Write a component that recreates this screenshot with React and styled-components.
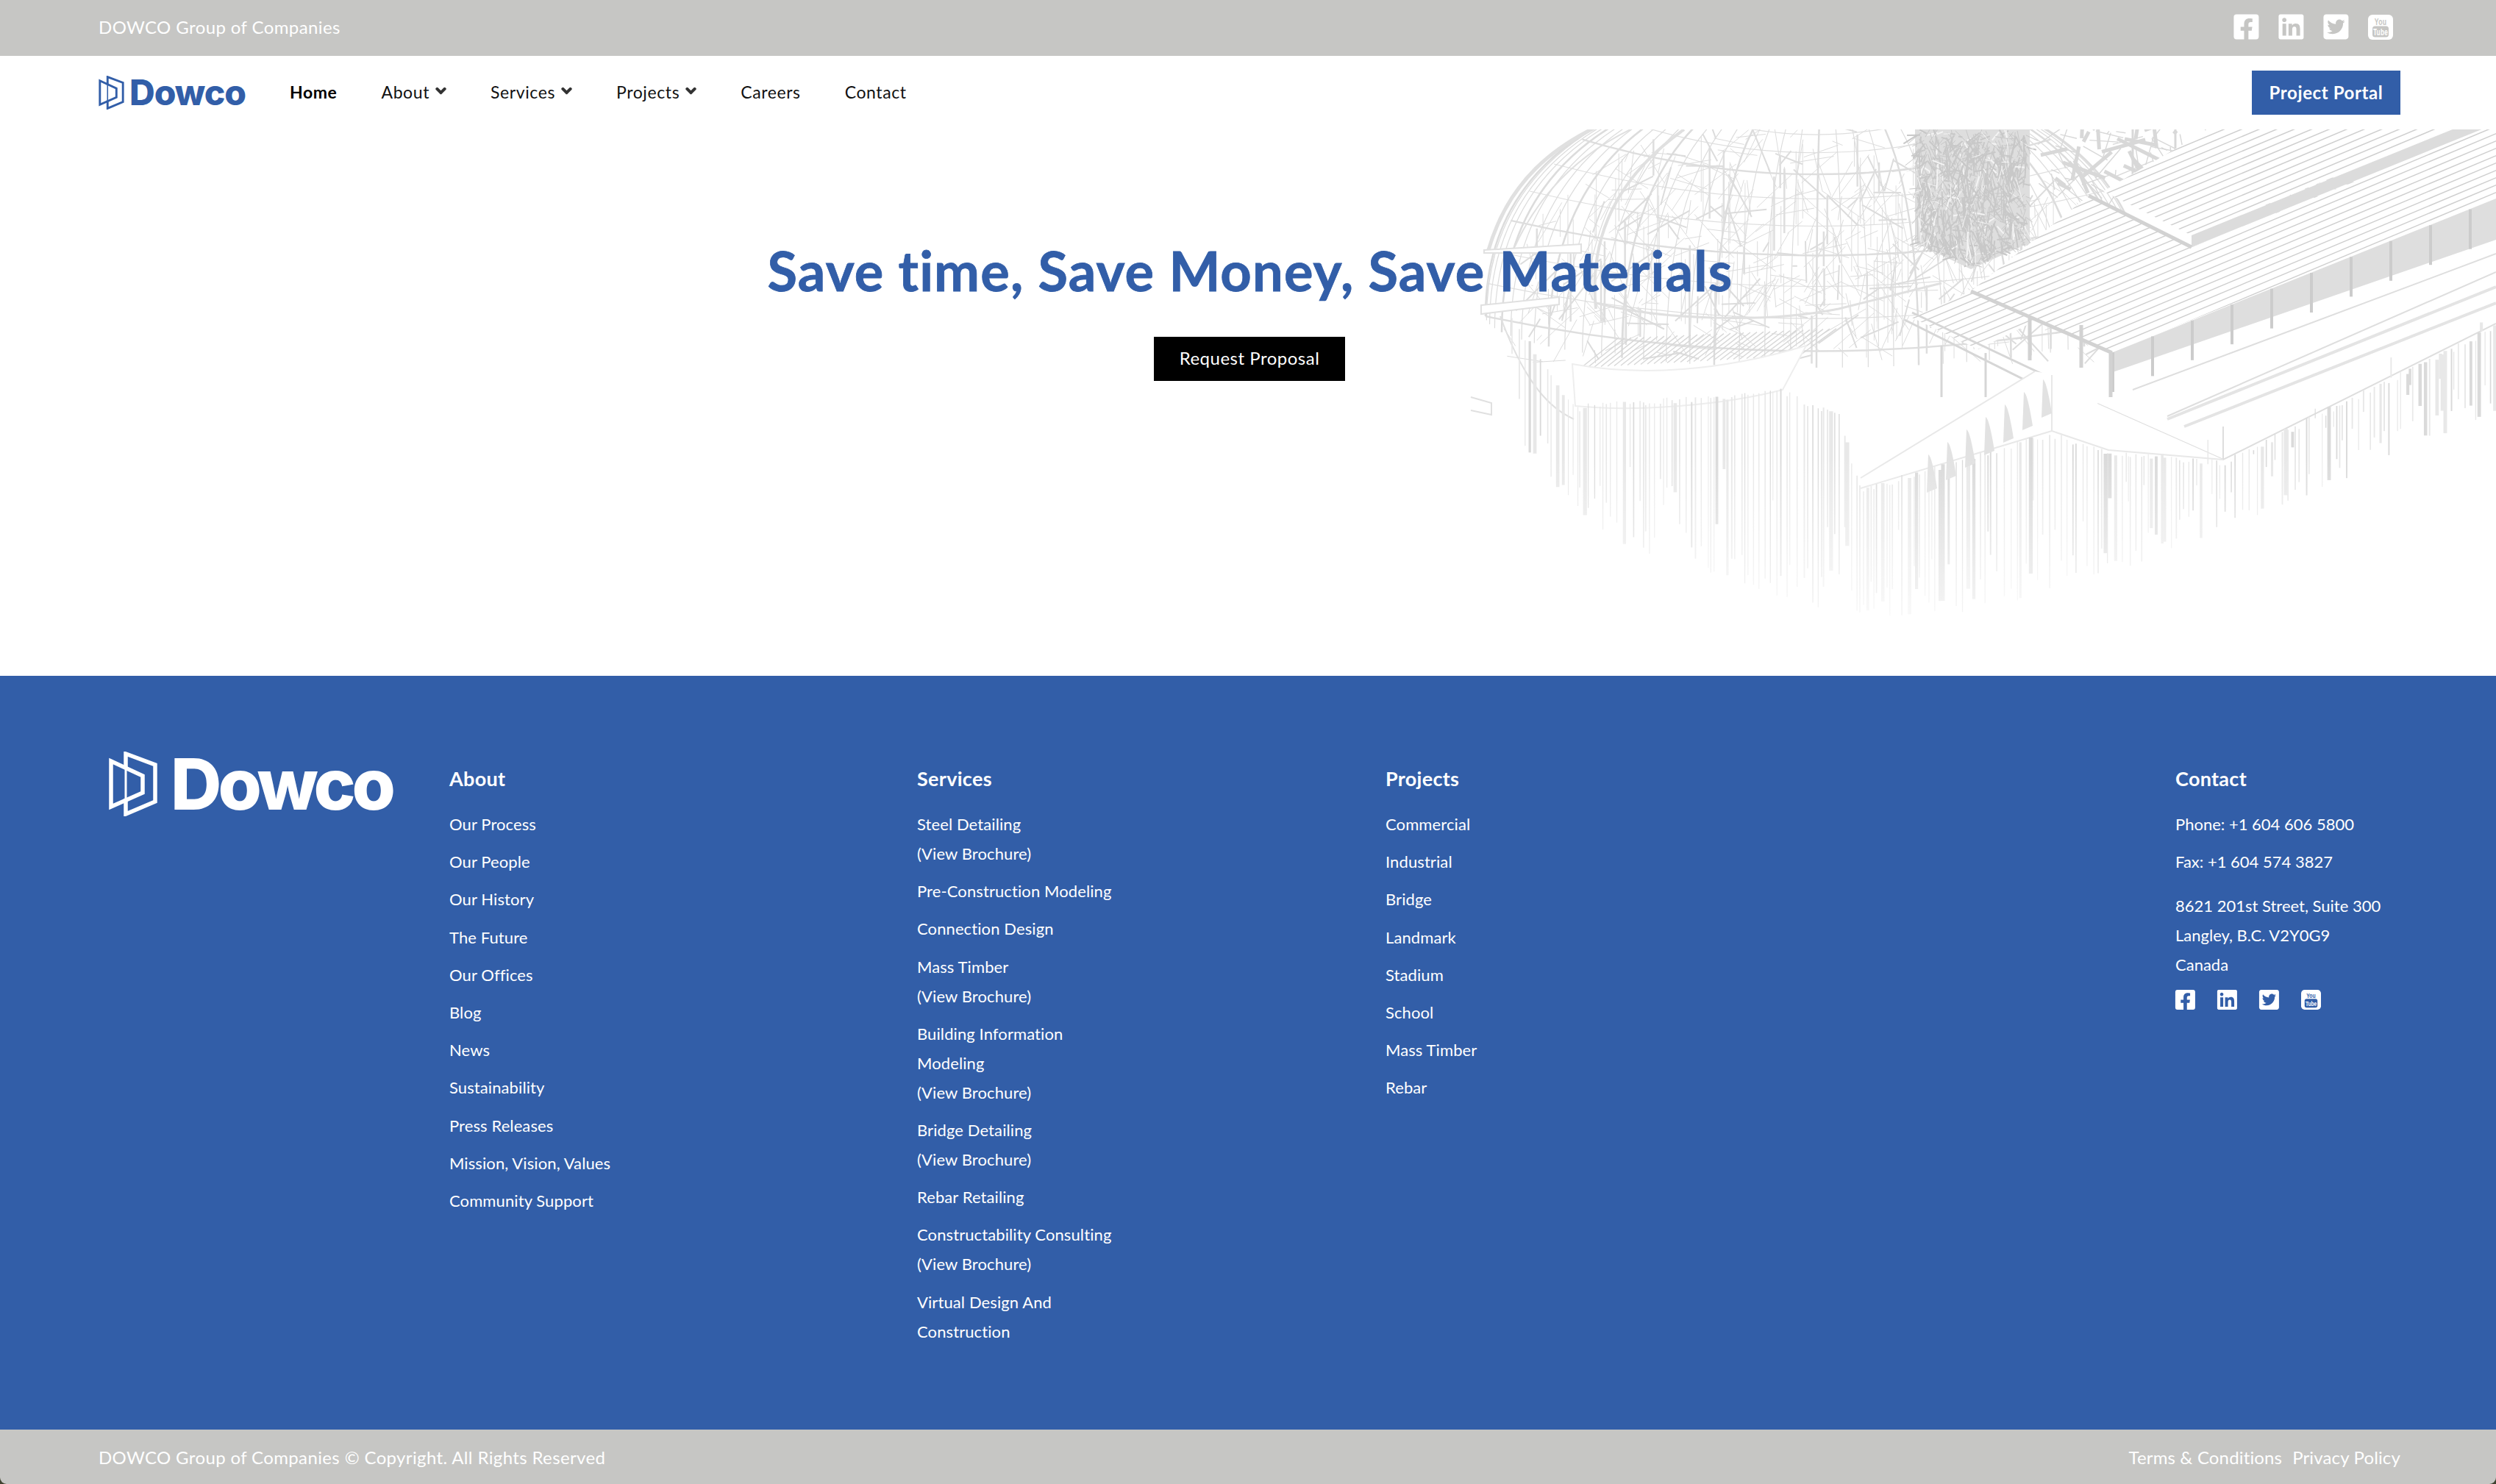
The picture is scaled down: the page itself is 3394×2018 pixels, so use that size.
import React from 'react';
import styled, { createGlobalStyle } from 'styled-components';
import { FaChevronDown, FaFacebookSquare, FaLinkedin, FaTwitterSquare } from 'react-icons/fa';

const BLUE = '#325ea8';
const GREY = '#c6c6c4';

const GlobalStyle = createGlobalStyle`
  html, body {
    margin: 0;
    padding: 0;
    background: #3f4330;
    font-family: 'Lato', 'Liberation Sans', sans-serif;
  }
  a {
    color: inherit;
    text-decoration: none;
  }
`;

const Page = styled.div`
  width: 3394px;
  height: 2018px;
  overflow: hidden;
  display: flex;
  flex-direction: column;
`;

const TopBar = styled.div`
  height: 76px;
  flex: none;
  box-sizing: border-box;
  background: ${GREY};
  color: #fff;
  display: flex;
  align-items: center;
  justify-content: space-between;
  padding: 0 140px 3px 134px;
  font-size: 24px;
  letter-spacing: 0.4px;
`;

const SocialRow = styled.div`
  display: flex;
  align-items: center;
  gap: ${props => props.$gap}px;
`;

const IconSlot = styled.span`
  display: flex;
  align-items: center;
  justify-content: center;
  width: ${props => props.$size}px;
  height: ${props => props.$size}px;
  svg {
    flex: none;
  }
`;

const NavBar = styled.div`
  height: 100px;
  flex: none;
  background: #fff;
  display: flex;
  align-items: center;
  padding: 0 130px 0 134px;
  position: relative;
  z-index: 1;
`;

const NavLinks = styled.nav`
  display: flex;
  align-items: center;
  gap: 60px;
  margin-left: 60px;
  margin-top: -3px;
  flex: 1;
`;

const NavItem = styled.a`
  display: flex;
  align-items: center;
  gap: 8px;
  font-size: 23px;
  letter-spacing: 0.6px;
  color: ${props => (props.$active ? '#000' : '#111')};
  font-weight: ${props => (props.$active ? 700 : 400)};
  svg {
    color: #333;
    stroke: #333;
    stroke-width: 60px;
    margin-top: -2px;
  }
`;

const PortalButton = styled.a`
  width: 202px;
  height: 60px;
  box-sizing: border-box;
  padding-bottom: 2px;
  background: ${BLUE};
  color: #fff;
  display: flex;
  align-items: center;
  justify-content: center;
  font-size: 24px;
  font-weight: 700;
  letter-spacing: 0.6px;
`;

const LogoWrap = styled.a`
  display: flex;
  align-items: center;
  flex: none;
  color: ${props => props.$color};
  gap: ${props => props.$gap}px;
`;

const LogoWord = styled.span`
  font-family: 'Inter', 'Liberation Sans', sans-serif;
  font-weight: 800;
  font-size: ${props => props.$size}px;
  line-height: 1;
  letter-spacing: ${props => props.$spacing}px;
`;

const Hero = styled.section`
  height: 743px;
  flex: none;
  background: #fff;
  position: relative;
  overflow: hidden;
  display: flex;
  flex-direction: column;
  align-items: center;
  padding: 142px 0 0 4px;
  box-sizing: border-box;
`;

const ArtLayer = styled.svg`
  position: absolute;
  top: 0;
  right: 0;
`;

const HeroTitle = styled.h1`
  position: relative;
  left: 1px;
  margin: 0 0 40px;
  font-size: 74px;
  line-height: 100px;
  font-weight: 700;
  letter-spacing: 1.15px;
  color: ${BLUE};
  -webkit-text-stroke: 0.8px ${BLUE};
`;

const ProposalButton = styled.a`
  position: relative;
  width: 260px;
  height: 60px;
  box-sizing: border-box;
  padding-bottom: 4px;
  background: #000;
  color: #fff;
  display: flex;
  align-items: center;
  justify-content: center;
  font-size: 24px;
  letter-spacing: 0.5px;
`;

const Footer = styled.footer`
  height: 1025px;
  flex: none;
  box-sizing: border-box;
  background: ${BLUE};
  color: #fff;
  padding: 99px 0 0 134px;
  display: grid;
  grid-template-columns: 477px 636px 637px 1074px 1fr;
  align-items: start;
`;

const FooterLogoCell = styled.div`
  padding-left: 14px;
`;

const Column = styled.div`
  padding-top: 21px;
`;

const ColumnTitle = styled.h4`
  margin: 0 0 22px;
  font-size: 27px;
  line-height: 40px;
  font-weight: 700;
  letter-spacing: 0.3px;
`;

const LinkList = styled.ul`
  list-style: none;
  margin: 0;
  padding: 0;
  display: flex;
  flex-direction: column;
  gap: 11.2px;
`;

const LinkItem = styled.li`
  font-size: 22px;
  line-height: 40px;
  letter-spacing: 0.1px;
  white-space: pre-line;
`;

const ContactLine = styled.div`
  font-size: 22px;
  line-height: 40px;
  margin-top: ${props => props.$top || 0}px;
`;

const ContactSocial = styled(SocialRow)`
  margin-top: 14px;
`;

const BottomBar = styled.div`
  height: 74px;
  flex: none;
  background: ${GREY};
  color: #fff;
  display: flex;
  align-items: center;
  justify-content: space-between;
  padding: 0 130px 0 134px;
  font-size: 24px;
  letter-spacing: 0.37px;
  border-radius: 0 0 9px 9px;
`;

const LegalLinks = styled.div`
  display: flex;
  gap: 14px;
  letter-spacing: 0.15px;
`;

function mulberry(seed) {
  let a = seed;
  return () => {
    a = (a + 0x6d2b79f5) | 0;
    let t = Math.imul(a ^ (a >>> 15), 1 | a);
    t = (t + Math.imul(t ^ (t >>> 7), 61 | t)) ^ t;
    return ((t ^ (t >>> 14)) >>> 0) / 4294967296;
  };
}

function interp(points, x) {
  for (let i = 1; i < points.length; i++) {
    if (x <= points[i][0]) {
      const [x0, y0] = points[i - 1];
      const [x1, y1] = points[i];
      return y0 + ((y1 - y0) * (x - x0)) / (x1 - x0);
    }
  }
  return points[points.length - 1][1];
}

const PILE_BOTTOM = [[2050, 560], [2071, 610], [2176, 730], [2350, 790], [2533, 846], [2700, 830], [2871, 780], [3148, 670], [3357, 575], [3394, 560]];
const PILE_TOP = [[2050, 420], [2140, 550], [2424, 528], [2500, 560], [2530, 662], [2790, 586], [2867, 610], [3023, 625], [3394, 440]];

function piles(rand) {
  const out = [];
  let x = 2056;
  while (x < 3394) {
    const bottom = interp(PILE_BOTTOM, x) - rand() * rand() * 170;
    const top = interp(PILE_TOP, x) + rand() * 10;
    const w = rand() < 0.22 ? 3 + rand() * 2.5 : 1 + rand();
    const darker = x > 2600 && x < 3200 ? 0.5 : 0.22;
    const tone = rand() < darker ? '#dadada' : '#e8e8e8';
    out.push(<line key={`p${x}`} x1={x} y1={top} x2={x} y2={bottom} stroke={tone} strokeWidth={w} />);
    x += 2.5 + rand() * 8;
  }
  return out;
}

function insideDome(x, y) {
  const u = (x - 2470) / 430;
  const v = (y - 430) / 290;
  return u * u + v * v < 1 && y < 495;
}

function dome(rand) {
  const out = [];
  const cx = 2470;
  const cy = 430;
  // meridians from the crown down to the rim
  for (let i = 0; i <= 40; i++) {
    const a = Math.PI * (i / 40);
    const rimX = cx - Math.cos(a) * 450;
    const rimY = cy + Math.sin(a) * 70;
    const d = `M${cx + 10} 90 Q${rimX} 130 ${rimX} ${rimY}`;
    out.push(<path key={`m${i}`} d={d} fill="none" stroke="#dcdcdc" strokeWidth={i % 4 === 0 ? 2.5 : 1.2} />);
  }
  // parallels
  for (let i = 1; i <= 12; i++) {
    const k = i / 12;
    const rx = 450 * Math.sin((k * Math.PI) / 2);
    const y = cy - 340 * Math.cos((k * Math.PI) / 2);
    const d = `M${cx - rx} ${y} Q${cx} ${y + 95} ${cx + rx} ${y}`;
    out.push(<path key={`r${i}`} d={d} fill="none" stroke="#dedede" strokeWidth={i % 3 === 0 ? 2.5 : 1.2} />);
  }
  // cross bracing and columns
  for (let i = 0; i < 620; i++) {
    const x = 2060 + rand() * 800;
    const y = 176 + rand() * 320;
    const dx = (rand() - 0.5) * 120;
    const dy = (rand() - 0.5) * 120;
    if (!insideDome(x, y) || !insideDome(x + dx, y + dy)) continue;
    out.push(<line key={`b${i}`} x1={x} y1={y} x2={x + dx} y2={y + dy} stroke="#dcdcdc" strokeWidth={rand() < 0.15 ? 2 : 1} />);
  }
  for (let i = 0; i < 190; i++) {
    const x = 2080 + rand() * 720;
    const y = 180 + rand() * 270;
    const len = 30 + rand() * 90;
    if (!insideDome(x, y) || !insideDome(x, y + len)) continue;
    out.push(<line key={`c${i}`} x1={x} y1={y} x2={x} y2={y + len} stroke="#dedede" strokeWidth={rand() < 0.25 ? 2.5 : 1} />);
  }
  // rims and outer shell
  out.push(
    <g key="shell" fill="none" stroke="#e0e0e0">
      <path d="M2024 340 C2050 250 2110 195 2200 160" strokeWidth="5" />
      <path d="M2060 335 C2090 270 2140 210 2230 170" strokeWidth="2" />
      <path d="M2170 420 C2160 320 2200 240 2290 176" strokeWidth="4" />
      <path d="M2018 340 L2150 332 L2150 344 L2018 344 Z" strokeWidth="2" fill="#fff" />
      <path d="M2014 415 L2120 404 L2120 414 L2014 427 Z" strokeWidth="2" fill="#fff" />
      <path d="M2000 540 L2028 548 L2028 564 L2000 558" strokeWidth="2" />
      <path d="M2170 412 C2260 435 2400 440 2500 420 L2640 385" strokeWidth="3" />
      <path d="M2040 430 C2080 540 2120 560 2140 570" strokeWidth="2" />
    </g>
  );
  return out;
}

function underDeck() {
  const out = [];
  for (let i = 0; i < 34; i++) {
    const x = 2150 + i * 9;
    out.push(<line key={`u${i}`} x1={x} y1={500 - i * 0.5} x2={x + 50} y2={460 - i * 0.4} stroke="#d8d8d8" strokeWidth="1.5" />);
  }
  return out;
}

function tower(rand) {
  const out = [];
  for (let i = 0; i < 1100; i++) {
    const x = 2606 + rand() * 150;
    const y = 176 + rand() * 190;
    const limit = 330 + 34 * (1 - Math.abs(x - 2680) / 76);
    if (y > limit) continue;
    const a = rand() * Math.PI;
    const len = 6 + rand() * 34;
    const y2 = Math.min(limit, y + Math.sin(a) * len);
    const tone = rand() < 0.12 ? '#f4f4f4' : '#c8c8c8';
    out.push(<line key={`t${i}`} x1={x} y1={y} x2={x + Math.cos(a) * len * 0.5} y2={y2} stroke={tone} strokeWidth={rand() < 0.4 ? 2 : 1} />);
  }
  return out;
}

function stripes(prefix, x0, x1, y0, step) {
  const out = [];
  let i = 0;
  for (let y = y0; y < 900; y += step) {
    out.push(<line key={`${prefix}${i++}`} x1={x0} y1={y} x2={x1} y2={y - (x1 - x0) * 0.42} stroke="#cfcfcf" strokeWidth="1.5" />);
  }
  return out;
}

function truss(rand) {
  const out = [];
  for (let i = 0; i < 130; i++) {
    const x = 2770 + rand() * 400;
    const y = 176 + rand() * 90;
    const dx = (rand() - 0.3) * 90;
    const dy = (rand() - 0.5) * 100;
    out.push(<line key={`x${i}`} x1={x} y1={y} x2={x + dx} y2={y + dy} stroke="#d8d8d8" strokeWidth={rand() < 0.3 ? 5 : 1.4} />);
  }
  for (let x = 2900; x < 3120; x += 58) {
    out.push(<line key={`xp${x}`} x1={x} y1={176} x2={x} y2={270 - (x - 2900) * 0.4} stroke="#d8d8d8" strokeWidth="3" />);
  }
  return out;
}

function wallPosts() {
  const out = [];
  for (let x = 2873, i = 0; x < 3394; x += 54, i++) {
    const y = 479 - (x - 2873) * 0.4;
    out.push(<line key={`w${i}`} x1={x} y1={y} x2={x} y2={y + 54} stroke="#cccccc" strokeWidth="4" />);
  }
  return out;
}

function fins() {
  const out = [];
  for (let i = 0; i < 7; i++) {
    const x = 2622 + i * 26;
    const top = 618 - i * 17;
    out.push(<path key={`f${i}`} d={`M${x} ${top} q5 2 12 46 l-14 6 Z`} fill="#e2e2e2" />);
  }
  return out;
}

function buildArt() {
  const rand = mulberry(41);
  return (
    <>
      <linearGradient id="pileFade" x1="0" y1="620" x2="0" y2="860" gradientUnits="userSpaceOnUse">
        <stop offset="0" stopColor="#fff" stopOpacity="0" />
        <stop offset="1" stopColor="#fff" stopOpacity="0.8" />
      </linearGradient>
      {dome(rand)}
      {underDeck()}
      <path d="M2138 495 C2230 512 2340 505 2456 470 L2424 530 C2340 552 2220 560 2142 552 Z" fill="#fff" stroke="#eeeeee" strokeWidth="2" />
      <rect x="2604" y="176" width="156" height="156" fill="#dedede" />
      <path d="M2604 330 L2680 366 L2760 330 Z" fill="#dedede" />
      {tower(rand)}
      <clipPath id="deckLower"><polygon points="2680,396 2870,479 3394,270 3394,170 2980,336 2840,266" /></clipPath>
      <clipPath id="deckUpper"><polygon points="2860,260 2980,320 3394,150 3394,60 3200,60" /></clipPath>
      <clipPath id="deckFront"><polygon points="2600,432 2680,396 2770,435 2690,475" /></clipPath>
      {truss(rand)}
      <polygon points="2600,432 2680,396 2770,435 2690,475" fill="#fff" />
      <polygon points="2680,396 2870,479 3394,270 3394,170 2980,336 2840,266" fill="#fff" />
      <polygon points="2860,260 2980,320 3394,150 3394,60 3200,60" fill="#fff" />
      <g clipPath="url(#deckFront)">{stripes('c', 2560, 2800, 400, 10)}</g>
      <g clipPath="url(#deckLower)">{stripes('a', 2660, 3400, 300, 10)}</g>
      <g clipPath="url(#deckUpper)">{stripes('b', 2800, 3400, 200, 10)}</g>
      <polygon points="2980,336 3394,168 3394,152 2980,320" fill="#dcdcdc" />
      <polygon points="2873,479 3394,270 3394,326 2873,506" fill="#dedede" />
      {wallPosts()}
      <path d="M2840 266 L2980 336 M2680 396 L2870 479 L2870 540 M2830 442 L2830 500 M2760 430 L2760 490" fill="none" stroke="#d2d2d2" strokeWidth="5" />
      <path d="M2600 425 L2780 510 M2590 435 L2760 520 M2640 470 L2640 540 M2700 480 L2700 540" fill="none" stroke="#d6d6d6" strokeWidth="3" />
      <polygon points="2852,549 3023,625 3394,440 3394,345 2900,530" fill="#fff" />
      <path d="M2852 549 L3023 625 L3394 440 M2947 566 L3394 370 M2900 530 L3394 345 M3023 625 L3023 580" fill="none" stroke="#dedede" strokeWidth="2" />
      <path d="M2947 570 L3394 390 M2970 580 L3394 412" fill="none" stroke="#e4e4e4" strokeWidth="4" />
      <polygon points="2767,505 2530,650 2530,664 2790,586 2867,612 3023,625 2852,549 2790,509" fill="#fff" />
      <path d="M2530 650 L2767 505 M2530 664 L2790 586 M2790 510 L2790 586 L2867 612 L3023 625" fill="none" stroke="#e8e8e8" strokeWidth="2" />
      {piles(rand)}
      {fins()}
      <rect x="1940" y="620" width="1454" height="299" fill="url(#pileFade)" />
    </>
  );
}

const art = buildArt();

function BuildingArt() {
  return (
    <ArtLayer width="1454" height="743" viewBox="1940 176 1454 743">
      {art}
    </ArtLayer>
  );
}

function LogoMark({ width, height, color }) {
  return (
    <svg width={width} height={height} viewBox="0 0 66 88" fill="none" stroke={color} strokeWidth="5.5">
      <path d="M3 13 L46 33 V56 L3 75 Z" />
      <path d="M23 24 V3 L63 18 V68 L23 85 V64" />
      <path d="M23 24 V64" strokeWidth="3" />
    </svg>
  );
}

function YoutubeSquare({ size, color, bg }) {
  return (
    <svg width={size} height={size} viewBox="0 0 34 34">
      <rect width="34" height="34" rx="6" fill={color} />
      <text transform="translate(17 13.5) scale(0.72 1)" textAnchor="middle" fontFamily="Liberation Sans, sans-serif" fontWeight="700" fontSize="12" fill={bg}>You</text>
      <rect x="6" y="15.5" width="22" height="15" rx="3.5" fill={bg} />
      <text transform="translate(17 27.5) scale(0.66 1)" textAnchor="middle" fontFamily="Liberation Sans, sans-serif" fontWeight="700" fontSize="12.5" fill={color}>Tube</text>
    </svg>
  );
}

function SocialIcons({ size, color, bg }) {
  const glyph = size * (512 / 448);
  return (
    <>
      <IconSlot $size={size}><FaFacebookSquare size={glyph} color={color} /></IconSlot>
      <IconSlot $size={size}><FaLinkedin size={glyph} color={color} /></IconSlot>
      <IconSlot $size={size}><FaTwitterSquare size={glyph} color={color} /></IconSlot>
      <IconSlot $size={size}><YoutubeSquare size={size} color={color} bg={bg} /></IconSlot>
    </>
  );
}

const ABOUT = ['Our Process', 'Our People', 'Our History', 'The Future', 'Our Offices', 'Blog', 'News', 'Sustainability', 'Press Releases', 'Mission, Vision, Values', 'Community Support'];
const SERVICES = [
  'Steel Detailing\n(View Brochure)',
  'Pre-Construction Modeling',
  'Connection Design',
  'Mass Timber\n(View Brochure)',
  'Building Information\nModeling\n(View Brochure)',
  'Bridge Detailing\n(View Brochure)',
  'Rebar Retailing',
  'Constructability Consulting\n(View Brochure)',
  'Virtual Design And\nConstruction',
];
const PROJECTS = ['Commercial', 'Industrial', 'Bridge', 'Landmark', 'Stadium', 'School', 'Mass Timber', 'Rebar'];

function LinkColumn({ title, items }) {
  return (
    <Column>
      <ColumnTitle>{title}</ColumnTitle>
      <LinkList>
        {items.map(item => (
          <LinkItem key={item}>{item}</LinkItem>
        ))}
      </LinkList>
    </Column>
  );
}

export default function App() {
  return (
    <Page>
      <GlobalStyle />
      <TopBar>
        <span>DOWCO Group of Companies</span>
        <SocialRow $gap={27}>
          <SocialIcons size={34} color="#fff" bg={GREY} />
        </SocialRow>
      </TopBar>
      <NavBar>
        <LogoWrap $color={BLUE} $gap={7}>
          <LogoMark width={35} height={46} color={BLUE} />
          <LogoWord $size={48} $spacing={-1}>Dowco</LogoWord>
        </LogoWrap>
        <NavLinks>
          <NavItem $active>Home</NavItem>
          <NavItem>About <FaChevronDown size={15} /></NavItem>
          <NavItem>Services <FaChevronDown size={15} /></NavItem>
          <NavItem>Projects <FaChevronDown size={15} /></NavItem>
          <NavItem>Careers</NavItem>
          <NavItem>Contact</NavItem>
        </NavLinks>
        <PortalButton>Project Portal</PortalButton>
      </NavBar>
      <Hero>
        <BuildingArt />
        <HeroTitle>Save time, Save Money, Save Materials</HeroTitle>
        <ProposalButton>Request Proposal</ProposalButton>
      </Hero>
      <Footer>
        <FooterLogoCell>
          <LogoWrap $color="#fff" $gap={18}>
            <LogoMark width={66} height={88} color="#fff" />
            <LogoWord $size={96} $spacing={-5}>Dowco</LogoWord>
          </LogoWrap>
        </FooterLogoCell>
        <LinkColumn title="About" items={ABOUT} />
        <LinkColumn title="Services" items={SERVICES} />
        <LinkColumn title="Projects" items={PROJECTS} />
        <Column>
          <ColumnTitle>Contact</ColumnTitle>
          <ContactLine>Phone: +1 604 606 5800</ContactLine>
          <ContactLine $top={11}>Fax: +1 604 574 3827</ContactLine>
          <ContactLine $top={20}>8621 201st Street, Suite 300</ContactLine>
          <ContactLine>Langley, B.C. V2Y0G9</ContactLine>
          <ContactLine>Canada</ContactLine>
          <ContactSocial $gap={30}>
            <SocialIcons size={27} color="#fff" bg={BLUE} />
          </ContactSocial>
        </Column>
      </Footer>
      <BottomBar>
        <span>DOWCO Group of Companies © Copyright. All Rights Reserved</span>
        <LegalLinks>
          <a>Terms &amp; Conditions</a>
          <a>Privacy Policy</a>
        </LegalLinks>
      </BottomBar>
    </Page>
  );
}
